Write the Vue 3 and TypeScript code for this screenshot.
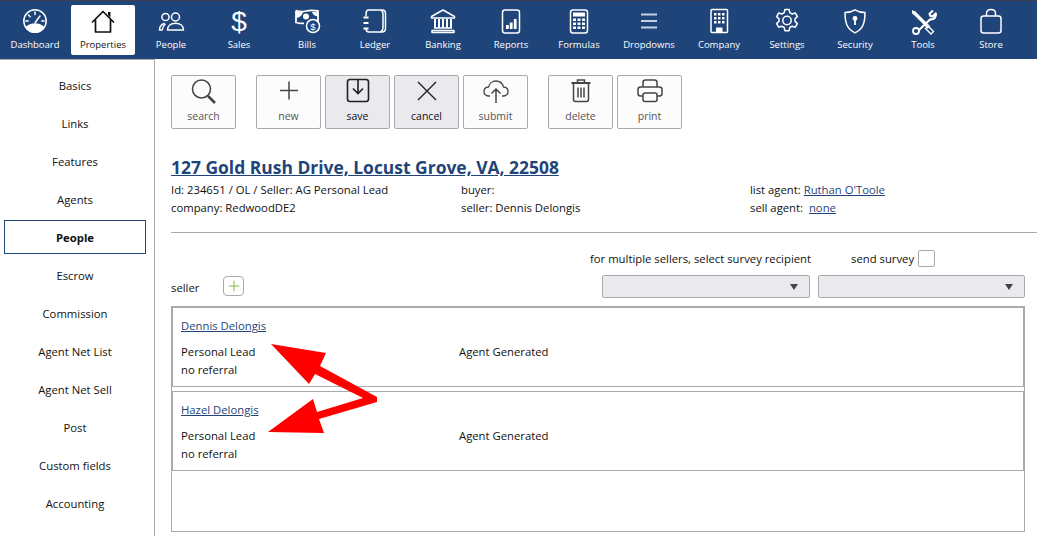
<script setup lang="ts">
interface NavItem { label: string; icon: string; active?: boolean; wide?: boolean }
interface ToolItem { label: string; icon: string; pressed?: boolean; gapBefore?: boolean }

const navItems: NavItem[] = [
  { label: 'Dashboard', icon: '<circle cx="16" cy="16" r="11.2"/><path d="M7.2 22.5c5-4.6 12.6-4.6 17.6 0-2 3-5.200 4.800-8.800 4.800s-6.800-1.800-8.800-4.800z" fill="currentColor"/><path d="M16 7v2.500M9.500 10l1.700 1.700M6.800 16h2.400M25.200 16h-2.400M16.200 17.500l4.800-6.500" stroke-linecap="round"/>' },
  { label: 'Properties', active: true, icon: '<path d="M5.500 17 16 6.500 26.500 17M8.500 14.500V27h15V14.500" stroke-width="1.700" stroke-linejoin="round" stroke-linecap="round"/><path d="M21 7h2.500v5.500L21 10z" fill="currentColor" stroke="none"/>' },
  { label: 'People', icon: '<circle cx="10.500" cy="12" r="3.600"/><circle cx="20.500" cy="12" r="4"/><path d="M4.500 25c0-3.500 1.800-5.500 4.500-6.500l1 1c-1.500 1-2.500 3-2.800 5.500zM12.500 25c0-4 3.200-6.800 8-6.800s8 2.800 8 6.800z" stroke-linejoin="round"/>' },
  { label: 'Sales', icon: '<text x="16" y="25.500" text-anchor="middle" font-family="Liberation Sans, sans-serif" font-size="28" fill="currentColor" stroke="none">$</text>' },
  { label: 'Bills', icon: '<path d="M5 5.500c4 1.500 6 1.500 10 .5s7-1 12 0v12" stroke-width="1.800"/><path d="M5 5.500v12c3 1 5 1.200 8 .8" stroke-width="1.800"/><path d="M5 6.500c3 1 7 .5 7 .5-1 4-3.500 5.500-7 6zM21 7c3 0 4.500 0 6 .5v4c-3-.5-5-1.500-6-4.500z" fill="currentColor" stroke="none"/><circle cx="15" cy="11.500" r="3" fill="currentColor" stroke="none"/><circle cx="22" cy="21" r="6.500" fill="#1f4479" stroke-width="1.600"/><text x="22" y="24.500" text-anchor="middle" font-family="Liberation Sans, sans-serif" font-size="9.500" fill="currentColor" stroke="none">$</text>' },
  { label: 'Ledger', icon: '<path d="M7 8.500C7 6.500 8 5 10 5h13c2 0 3.500 1.500 3.500 3.500v15c0 2-1.500 3.500-3.500 3.500H10c-2 0-3-1.500-3-3.500"/><path d="M8 7.500c-1 0-1 2-1 4M22 5.500c2 .5 2 2 2 3.500v14c0 2-1 3-2.500 4"/><path d="M4.500 12.500h5M4.500 18h5M4.500 23.500h5" stroke-width="2"/>' },
  { label: 'Banking', icon: '<path d="M16 5 4.500 11.500v1.500h23v-1.500zM5 25.500h22v2H5zM7 23h18" stroke-linejoin="round"/><path d="M8 14v9M12 14v9M16 14v9M20 14v9M24 14v9" stroke-width="2"/>' },
  { label: 'Reports', icon: '<rect x="7.500" y="5" width="17" height="23" rx="2.500"/><path d="M11 24h2.800v-4H11zM14.800 24h2.800v-6.500h-2.800zM18.800 24h2.800V14h-2.800z" fill="currentColor" stroke="none"/>' },
  { label: 'Formulas', icon: '<rect x="7.500" y="5" width="17" height="23" rx="2.500"/><rect x="10" y="7.500" width="12" height="4" fill="currentColor" stroke="none"/><path d="M10 13.500h3v2.500h-3zM14.500 13.500h3v2.500h-3zM19 13.500h3v2.500h-3zM10 17.500h3V20h-3zM14.500 17.500h3V20h-3zM19 17.500h3V20h-3zM10 21.500h3V24h-3zM14.500 21.500h3V24h-3zM19 21.500h3V24h-3z" fill="currentColor" stroke="none"/>' },
  { label: 'Dropdowns', wide: true, icon: '<path d="M8 9.500h16M8 16h16M8 22.500h16" stroke="#c5d0e0" stroke-width="2"/>' },
  { label: 'Company', icon: '<rect x="8" y="4.500" width="16.500" height="23" rx="1"/><path d="M11 8h2.500v2.500H11zM15 8h2.500v2.500H15zM19 8h2.500v2.500H19zM11 12h2.500v2.500H11zM15 12h2.500v2.500H15zM19 12h2.500v2.500H19zM11 16h2.500v2.500H11zM15 16h2.500v2.500H15zM19 16h2.500v2.500H19zM13 22.500h6.500V27.500H13z" fill="currentColor" stroke="none"/>' },
  { label: 'Settings', icon: '<path d="m13.900 4.500-.7 3.200-2.300 1.300-3.200-1-2.100 3.600 2.400 2.200v2.600l-2.400 2.200 2.100 3.600 3.200-1 2.300 1.300.7 3.200h4.200l.7-3.200 2.300-1.300 3.200 1 2.100-3.600-2.400-2.200v-2.600l2.400-2.200-2.100-3.600-3.200 1-2.300-1.300-.7-3.200z" stroke-linejoin="round"/><circle cx="16" cy="15.500" r="4.200"/>' },
  { label: 'Security', icon: '<path d="M16 4.800c3.500 2.200 7 2.800 10 2.800 0 9.500-1.500 16-10 20.200C7.500 23.600 6 17.100 6 7.600c3 0 6.500-.6 10-2.800z" stroke-linejoin="round"/><circle cx="16" cy="13.500" r="2.400" fill="currentColor" stroke="none"/><path d="M16 14v6" stroke-width="1.800"/>' },
  { label: 'Tools', icon: '<path d="M6.500 7 22 22.500" stroke-width="3.400"/><path d="M5 5l2.500 1.500 1 2.500L7 10 5 8z" fill="currentColor" stroke="none"/><path d="M21 21l5.500 5.500-2.500 2.500-5.500-5.500z" stroke-width="1.400"/><path d="M26 5.500l-3.500 3.200.8 2.200 2.200.6 3.300-3.100c.7 3.500-2 6.600-5.500 5.800L11.500 25.500" stroke-width="2.200" stroke-linejoin="round"/><circle cx="9" cy="26" r="3" stroke-width="1.800"/>' },
  { label: 'Store', icon: '<rect x="6" y="11" width="20" height="17" rx="2.500"/><path d="M11.500 11V8.500C11.500 5.500 13 4.500 16 4.500s4.500 1 4.500 4V11"/>' },
]

const toolItems: ToolItem[] = [
  { label: 'search', icon: '<circle cx="14.500" cy="13" r="9" stroke-width="1.500"/><path d="m21 20 7 7" stroke-width="2.600"/>' },
  { label: 'new', gapBefore: true, icon: '<path d="M17 5.500v18M8 14.500h18" stroke-width="1.500"/>' },
  { label: 'save', pressed: true, icon: '<rect x="6.500" y="3.500" width="21" height="22" rx="2.500" stroke="#222" stroke-width="1.600"/><path d="M17 3.500V17M12 12.500l5 5 5-5" stroke="#222" stroke-width="1.600"/>' },
  { label: 'cancel', pressed: true, icon: '<path d="m8 6 18 18M26 6 8 24" stroke="#222" stroke-width="1.400"/>' },
  { label: 'submit', icon: '<path d="M11 20H9.500c-3-.3-4.500-2.500-4.500-4.500 0-2.500 1.800-4.300 4.500-4.500C10.300 7.500 13.500 5 17 5s6.500 2.500 7.500 6c2.700.2 4.500 2 4.500 4.500 0 2-1.500 4.200-4.500 4.500H23" stroke-width="1.300"/><path d="M17 27V13M12.500 17.500 17 13l4.500 4.500" stroke-width="1.500"/>' },
  { label: 'delete', gapBefore: true, icon: '<path d="M7.500 7h19" stroke-width="2"/><path d="M13.500 6.500V4h7v2.500M9.500 8v15.500c0 1 .8 2 2 2h11c1.200 0 2-1 2-2V8M14 11.500v10M17 11.500v10M20 11.500v10" stroke-width="1.500"/>' },
  { label: 'print', icon: '<path d="M10 11V6.500C10 5 11 4 12.500 4h9C23 4 24 5 24 6.500V11M10 20H7.500C6 20 5 19 5 17.500V13.500C5 12 6 11 7.500 11h19c1.500 0 2.500 1 2.500 2.500v4c0 1.500-1 2.500-2.500 2.500H24" stroke-width="1.500"/><rect x="10" y="17" width="14" height="8.500" rx="2" stroke-width="1.500"/>' },
]

const sideItems: string[] = ['Basics', 'Links', 'Features', 'Agents', 'People', 'Escrow', 'Commission', 'Agent Net List', 'Agent Net Sell', 'Post', 'Custom fields', 'Accounting']
const sellers: string[] = ['Dennis Delongis', 'Hazel Delongis']
</script>

<template>
  <div class="page">
    <header class="nav">
      <a v-for="item in navItems" :key="item.label" class="nav-item" :class="{ active: item.active, wide: item.wide }">
        <svg class="nav-icon" viewBox="0 0 32 32" fill="none" stroke="currentColor" stroke-width="1.500" v-html="item.icon"></svg>
        <span>{{ item.label }}</span>
      </a>
    </header>

    <div class="body">
      <aside class="side">
        <a v-for="name in sideItems" :key="name" class="side-item" :class="{ current: name === 'People' }">{{ name }}</a>
      </aside>

      <main class="main">
        <div class="toolbar">
          <button v-for="tool in toolItems" :key="tool.label" class="tool" :class="{ pressed: tool.pressed, spaced: tool.gapBefore }" type="button">
            <svg class="tool-icon" viewBox="0 0 34 30" fill="none" stroke="#444" v-html="tool.icon"></svg>
            <span>{{ tool.label }}</span>
          </button>
        </div>

        <h1 class="title"><a>127 Gold Rush Drive, Locust Grove, VA, 22508</a></h1>

        <div class="info">
          <div>Id: 234651 / OL / Seller: AG Personal Lead</div>
          <div>buyer:</div>
          <div>list agent: <a class="link">Ruthan O'Toole</a></div>
          <div>company: RedwoodDE2</div>
          <div>seller: Dennis Delongis</div>
          <div>sell agent: &nbsp;<a class="link">none</a></div>
        </div>

        <hr class="rule" />

        <div class="survey">
          <span class="survey-text">for multiple sellers, select survey recipient</span>
          <span class="survey-send">send survey</span>
          <span class="check"></span>
        </div>

        <div class="seller-row">
          <span class="seller-label">seller</span>
          <span class="add">
            <svg viewBox="0 0 20 20" width="20" height="20" fill="none" stroke="#7ab648" stroke-width="1.200"><path d="M10 3.500v13M3.500 10h13" /></svg>
          </span>
          <div class="selects">
            <div class="select"><i></i></div>
            <div class="select"><i></i></div>
          </div>
        </div>

        <div class="list">
          <section v-for="person in sellers" :key="person" class="card">
            <a class="link name">{{ person }}</a>
            <div class="card-grid">
              <div>Personal Lead</div>
              <div>Agent Generated</div>
              <div>no referral</div>
            </div>
          </section>
        </div>
      </main>
    </div>

    <svg class="arrows" width="1037" height="536" viewBox="0 0 1037 536">
      <polygon fill="#fe0000" points="271,344 326,353 320,366 377,397 377,402 319,419 324,433 268,432 313,399 317,412 363,398 315,374 309,384" />
    </svg>
  </div>
</template>

<style>
html, body { margin: 0; background: #fff; }
</style>

<style scoped>
.page {
  position: relative;
  width: 1037px;
  height: 536px;
  overflow: hidden;
  display: flex;
  flex-direction: column;
  background: #fff;
  font-family: "Open Sans", sans-serif;
  font-size: 11.300px;
  color: #111;
}
.nav {
  height: 59px;
  flex: none;
  box-sizing: border-box;
  border-top: 1px solid #3d3f4d;
  background: #1f4479;
  display: flex;
  gap: 4px;
  padding: 4px 0 0 3px;
}
.nav-item {
  width: 64px;
  height: 50px;
  flex: none;
  border-radius: 2px;
  display: flex;
  flex-direction: column;
  align-items: center;
  color: #fff;
  font-size: 9.500px;
  line-height: 14px;
}
.nav-item.wide { margin: 0 1px; width: 66px; }
.nav-item.active { background: #fff; color: #111; }
.nav-icon { width: 32px; height: 32px; flex: none; margin-bottom: 1px; }
.body { flex: 1; display: flex; min-height: 0; }
.side {
  width: 155px;
  box-sizing: border-box;
  flex: none;
  border-top: 1px solid #aaa;
  border-right: 1px solid #aaa;
  padding: 8px 0 0 4px;
  display: flex;
  flex-direction: column;
  gap: 4px;
  align-items: flex-start;
}
.side-item {
  width: 142px;
  height: 34px;
  box-sizing: border-box;
  display: flex;
  align-items: center;
  justify-content: center;
}
.side-item.current { border: 1px solid #1f4479; font-weight: 700; }
.main { flex: 1; min-width: 0; padding: 16px 12px 0 16px; }
.toolbar { display: flex; gap: 4px; }
.tool {
  width: 65px;
  height: 54px;
  box-sizing: border-box;
  padding: 0;
  border: 1px solid #aaa;
  border-radius: 2px;
  background: #fcfcfc;
  font: inherit;
  font-size: 10.500px;
  color: #555;
  display: flex;
  flex-direction: column;
  align-items: center;
}
.tool.spaced { margin-left: 16px; }
.tool.pressed { background: #e9e9ee; color: #111; }
.tool-icon { width: 34px; height: 30px; flex: none; margin-bottom: 3px; }
.title {
  margin: 27px 0 0;
  font-size: 17.450px;
  line-height: 22px;
  font-weight: 700;
  color: #1f4479;
}
.title a { text-decoration: underline; }
.info {
  margin-top: 3px;
  display: grid;
  grid-template-columns: 290px 289px 1fr;
  line-height: 18px;
}
.link { color: #1f4479; text-decoration: underline; }
.rule { margin: 15px -12px 0 0; border: 0; border-top: 1px solid #aaa; }
.survey { display: flex; align-items: center; height: 18px; margin-top: 16px; padding-left: 419px; }
.survey-send { margin-left: 40px; }
.check { width: 15px; height: 15px; border: 1px solid #aaa; border-radius: 2px; margin-left: 4px; }
.seller-row { display: flex; align-items: center; height: 24px; margin-top: 7px; }
.seller-label { width: 52px; padding-top: 2px; }
.add {
  width: 21px;
  height: 20px;
  box-sizing: border-box;
  border: 1px solid #aaa;
  border-radius: 4px;
  display: flex;
  align-items: center;
  justify-content: center;
}
.add svg { width: 16px; height: 16px; }
.selects { margin-left: auto; display: flex; gap: 8px; }
.select {
  width: 208px;
  height: 23px;
  box-sizing: border-box;
  border: 1px solid #aaa;
  border-radius: 2px;
  background: #e9e9ee;
  position: relative;
}
.select:last-child { width: 207px; }
.select i {
  position: absolute;
  right: 11px;
  top: 8px;
  border-left: 4px solid transparent;
  border-right: 4px solid transparent;
  border-top: 6px solid #444;
}
.list {
  margin-top: 8px;
  height: 226px;
  box-sizing: border-box;
  border: 1px solid #aaa;
  display: flex;
  flex-direction: column;
  gap: 4px;
}
.card {
  height: 80px;
  box-sizing: border-box;
  border: 1px solid #aaa;
  padding: 9px 8px 0;
}
.name { display: block; line-height: 18px; }
.card-grid {
  margin-top: 8px;
  display: grid;
  grid-template-columns: 278px 1fr;
  line-height: 18px;
}
.arrows { position: absolute; left: 0; top: 0; pointer-events: none; }
</style>
